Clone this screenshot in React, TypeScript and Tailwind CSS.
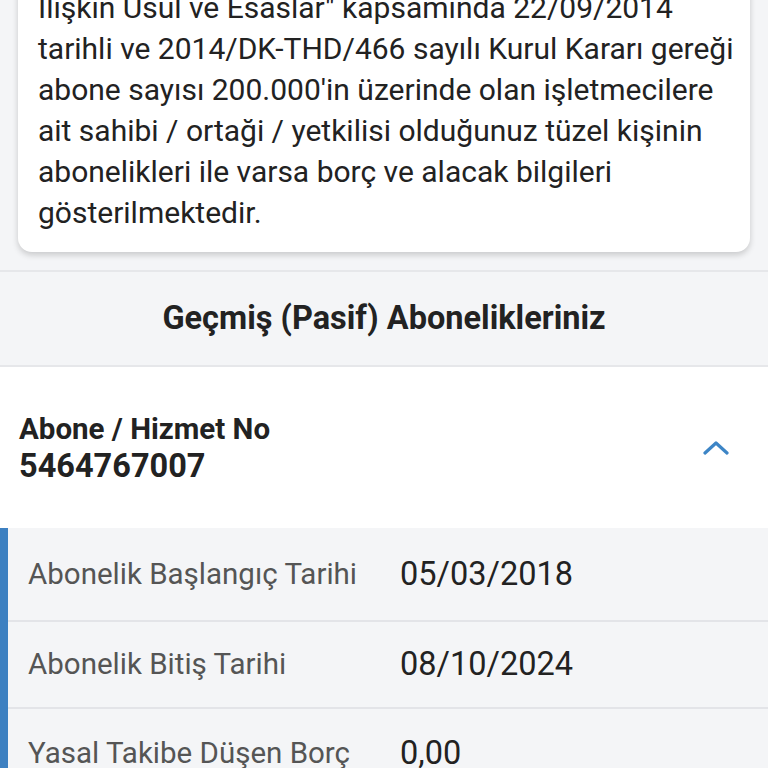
import React from "react";

export default function App() {
  const rows = [
    { label: "Abonelik Başlangıç Tarihi", value: "05/03/2018", h: "h-[94px]" },
    { label: "Abonelik Bitiş Tarihi", value: "08/10/2024", h: "h-[87px]" },
    { label: "Yasal Takibe Düşen Borç", value: "0,00", h: "h-[88px]" },
  ];
  return (
    <div className="w-[768px] h-[768px] overflow-hidden bg-[#f4f5f7] text-[#222]" style={{ fontFamily: "Roboto, 'Noto Sans', sans-serif" }}>
      <div className="px-[18px]">
        <div className="-mt-[40px] bg-white rounded-[14px] shadow-[0_3px_6px_rgba(0,0,0,0.18)] pl-[20px] pr-[12px] pt-[27px] pb-[19px] text-[30px] leading-[41px] text-[#222]">
          İlişkin Usul ve Esaslar" kapsamında 22/09/2014 tarihli ve 2014/DK-THD/466 sayılı Kurul Kararı gereği abone sayısı 200.000'in üzerinde olan işletmecilere ait sahibi / ortaği / yetkilisi olduğunuz tüzel kişinin abonelikleri ile varsa borç ve alacak bilgileri gösterilmektedir.
        </div>
      </div>
      <div className="mt-[18px] border-t-2 border-[#e6e7ea]" />
      <div className="h-[95px] flex items-center justify-center border-b-2 border-[#e6e7ea] bg-[#f4f5f7]">
        <span className="text-[32.5px] font-bold text-[#222]">Geçmiş (Pasif) Abonelikleriniz</span>
      </div>
      <div className="bg-white h-[161px] flex items-center justify-between pl-[19px] pr-[39px]">
        <div className="flex flex-col">
          <span className="text-[29.5px] font-bold leading-[36px] text-[#222]">Abone / Hizmet No</span>
          <span className="text-[32.5px] font-bold leading-[38px] text-[#222]">5464767007</span>
        </div>
        <svg width="26" height="16" viewBox="0 0 26 16" fill="none">
          <path d="M2 13 L13 3 L24 13" stroke="#3d85c6" strokeWidth="3.2" strokeLinecap="round" strokeLinejoin="round" />
        </svg>
      </div>
      <div className="flex bg-[#f4f5f7]">
        <div className="w-[8px] bg-[#3d80c1]" />
        <div className="flex-1 flex flex-col">
          {rows.map((r, i) => (
            <div key={i} className={`${r.h} flex items-center pl-[20px] ${i < rows.length - 1 ? "border-b-2 border-[#e3e4e8]" : ""}`}>
              <span className="w-[372px] text-[29.5px] text-[#555]">{r.label}</span>
              <span className="text-[32.5px] text-[#222]">{r.value}</span>
            </div>
          ))}
        </div>
      </div>
    </div>
  );
}
